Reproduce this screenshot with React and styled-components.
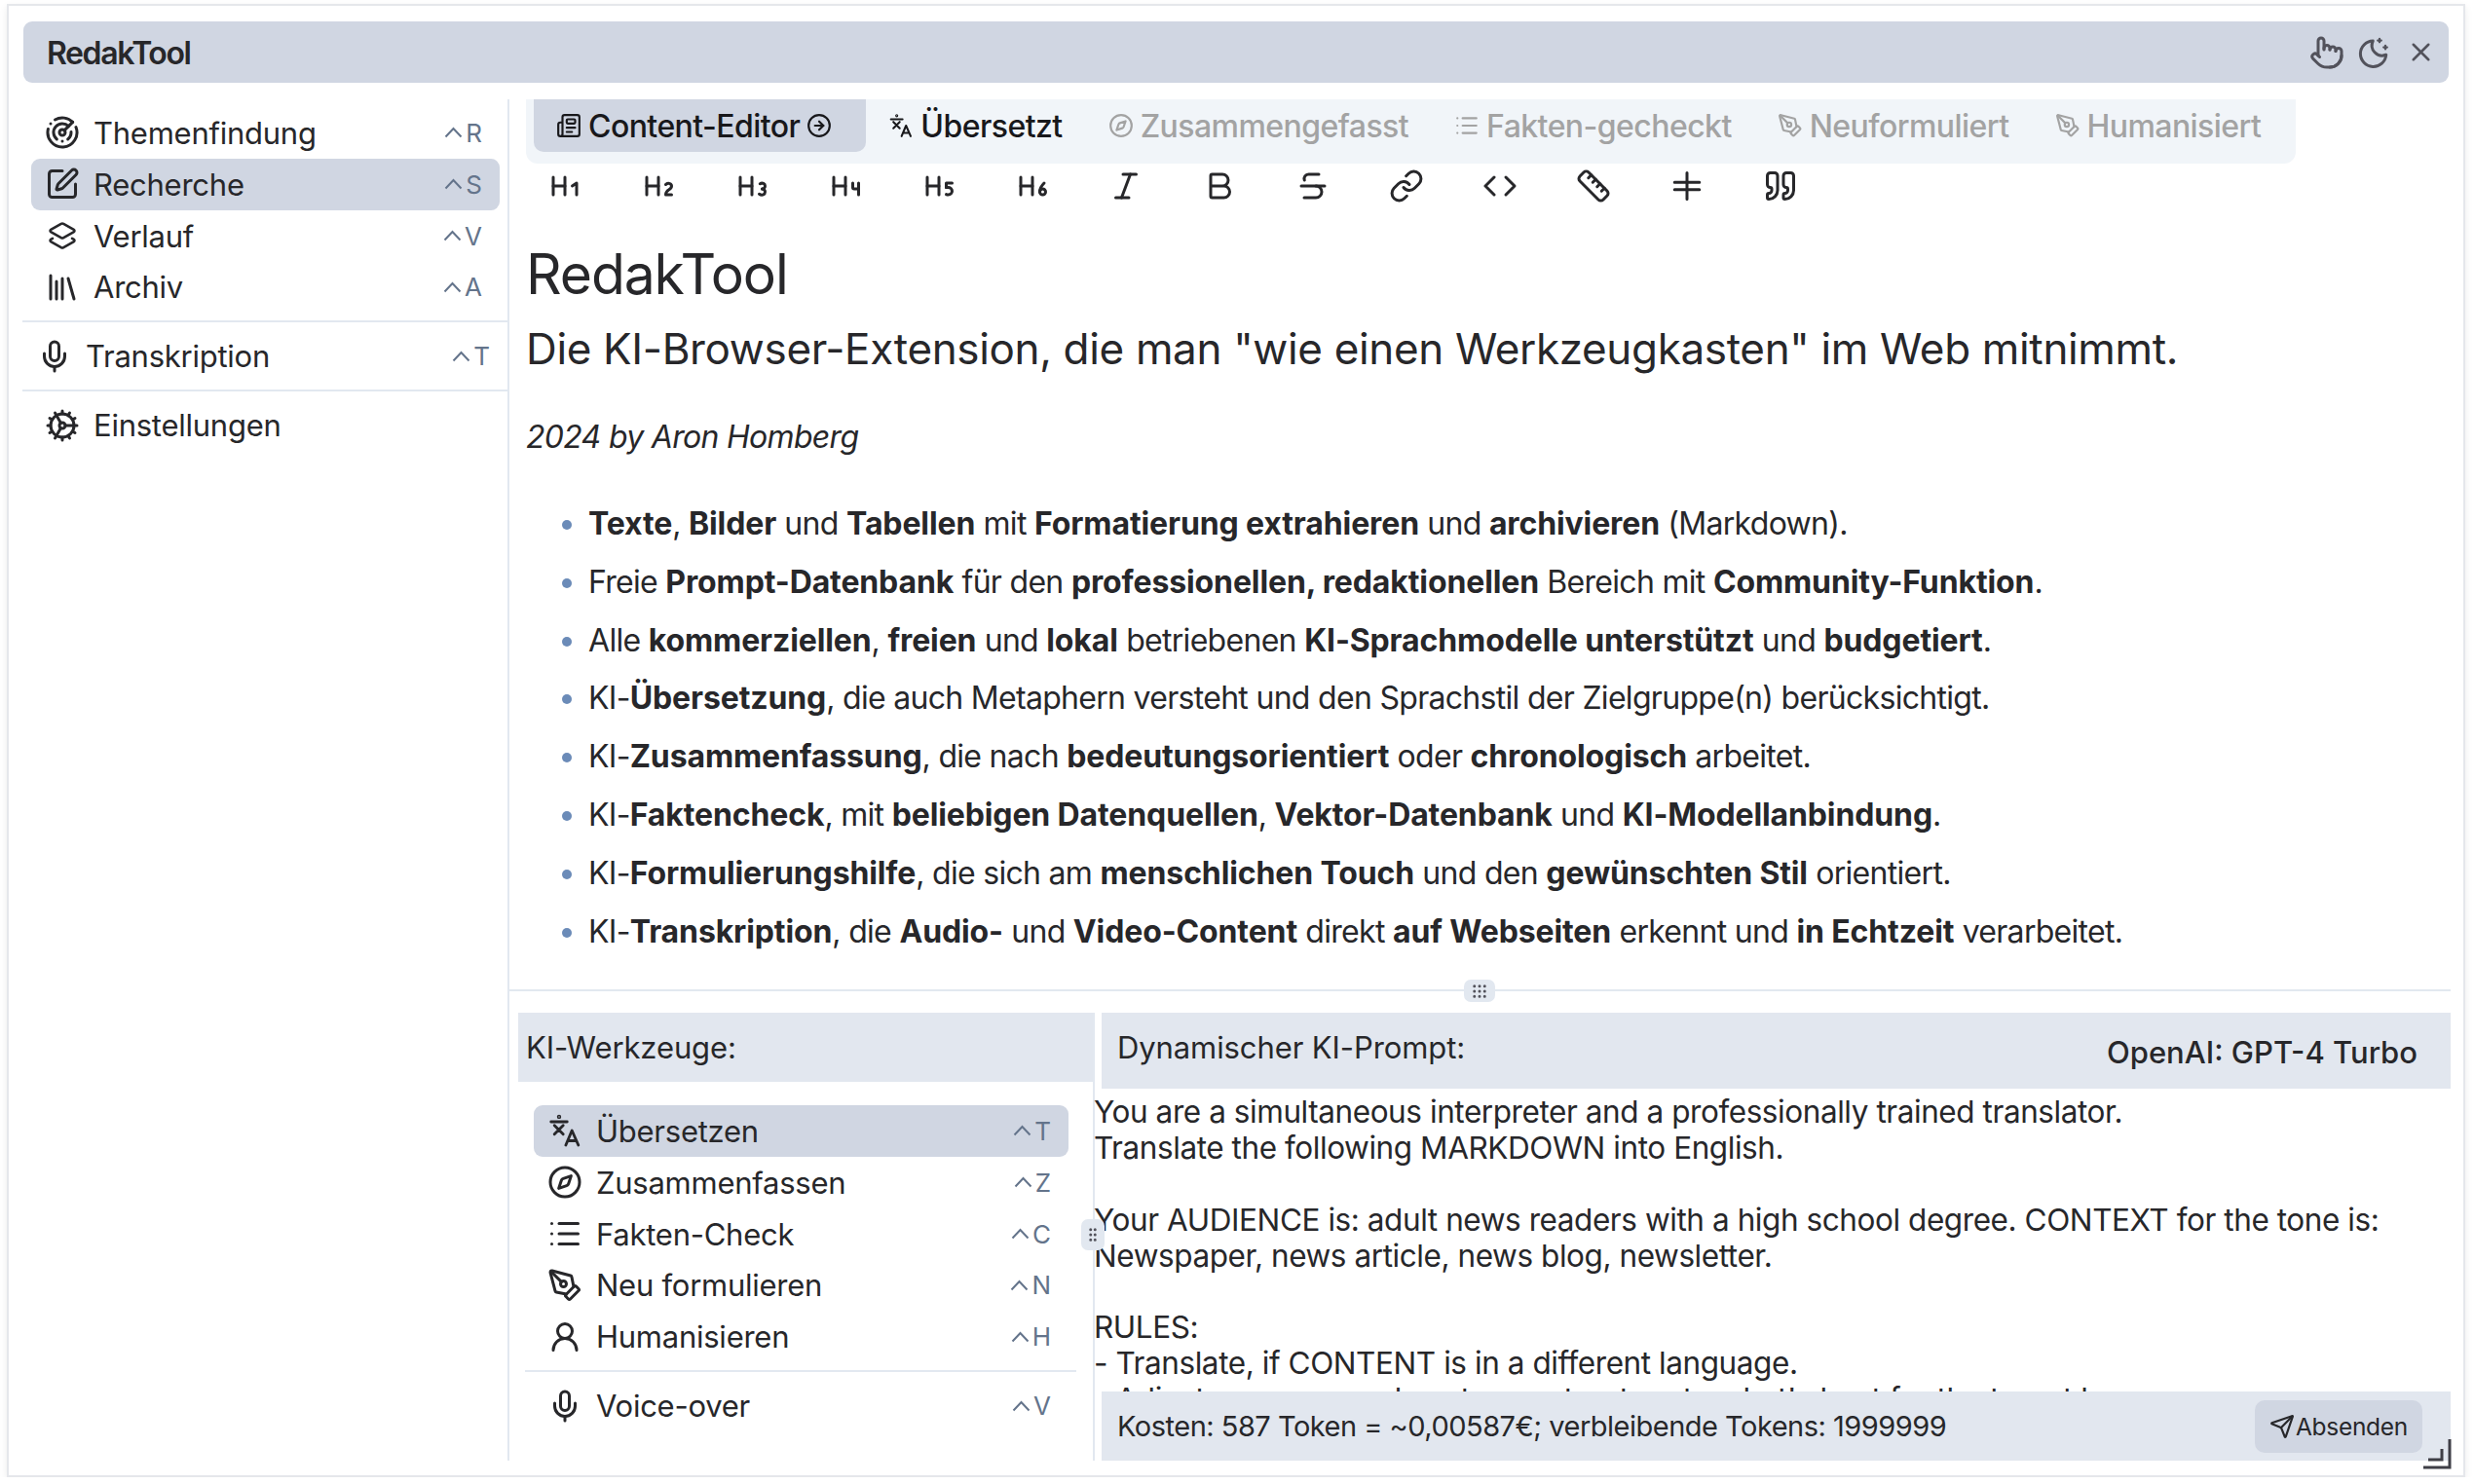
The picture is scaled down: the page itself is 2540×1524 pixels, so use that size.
import React from 'react';
import styled, { createGlobalStyle } from 'styled-components';
import {
  Radar, SquarePen, Layers2, Library, Mic, Cog, Compass, List, PenTool, UserRound, Send, Newspaper,
  CircleArrowRight, Pointer, X, Heading1, Heading2, Heading3, Heading4, Heading5, Heading6,
  Italic, Bold, Strikethrough, Link, Code, Ruler, Quote, Grip, GripVertical,
} from 'lucide-react';

const GlobalStyle = createGlobalStyle`
  html, body {
    margin: 0;
    padding: 0;
    background: #fff;
    font-family: Inter, "Liberation Sans", sans-serif;
    color: #27272a;
  }
  * { box-sizing: border-box; }
`;

const TranslateIcon = ({ size = 38 }) => (
  <svg width={size} height={size} viewBox="0 0 24 24" fill="none" stroke="currentColor" strokeWidth="1.9" strokeLinecap="round" strokeLinejoin="round">
    <circle cx="8" cy="2.6" r="0.5" />
    <path d="M2.5 6h11M4.8 8.5l6 6M10.8 8.5l-6 6M12.6 22l4.2-10 4.4 10M14 19h5.8" />
  </svg>
);

const RuleIcon = ({ size = 36 }) => (
  <svg width={size} height={size} viewBox="0 0 24 24" fill="none" stroke="currentColor" strokeWidth="2" strokeLinecap="round">
    <path d="M3.5 9.5h17M3.5 14.5h17M12 3v18" />
  </svg>
);

const MoonSparkles = () => (
  <svg width="36" height="36" viewBox="0 0 24 24" fill="none" stroke="currentColor" strokeWidth="2" strokeLinecap="round" strokeLinejoin="round">
    <path d="M11.5 4a7 7 0 0 0 9 9.5 8.8 8.8 0 1 1-9-9.5Z" />
    <path d="M16 2.5v2.4M14.8 3.7h2.4M20 7.2v2.4M18.8 8.4h2.4" strokeWidth="1.5" />
  </svg>
);

const Caret = () => (
  <svg width="19" height="12" viewBox="0 0 19 12" fill="none" stroke="currentColor" strokeWidth="2">
    <path d="M1.5 10.5 9.5 2l8 8.5" />
  </svg>
);

const Window = styled.div`
  position: relative;
  width: 2524px;
  height: 1513px;
  margin: 4px 0 0 7px;
  padding-top: 16px;
  border: 2px solid #e5e7eb;
  background: #fff;
  box-shadow: 0 3px 8px rgba(0, 0, 0, 0.08);
`;

const TitleBar = styled.header`
  display: flex;
  align-items: center;
  justify-content: space-between;
  height: 63px;
  margin: 0 15px 0 15px;
  padding: 2px 11px 0 24px;
  border-radius: 9px;
  background: #d0d6e2;
`;

const Title = styled.div`
  font-size: 32px;
  font-weight: 600;
  letter-spacing: -1.4px;
  color: #27272a;
`;

const WindowButtons = styled.div`
  display: flex;
  align-items: center;
  gap: 12px;
  margin-top: -2px;
  color: #52525b;
  svg { display: block; }
`;

const WindowIconSlot = styled.span`
  display: flex;
  align-items: center;
  justify-content: center;
  width: 36px;
  height: 36px;
`;

const Body = styled.div`
  display: flex;
  height: 1398px;
  margin: 17px 13px 0 14px;
`;

const Sidebar = styled.nav`
  flex: 0 0 500px;
  padding-top: 8px;
  border-right: 2px solid #e2e8f0;
`;

const MenuRow = styled.div`
  display: flex;
  align-items: center;
  height: 52.85px;
  margin: 0 ${(p) => (p.$outer ? '0 0 1px' : '8px 0 9px')};
  padding: 0 18px 0 14px;
  border-radius: 9px;
  background: ${(p) => (p.$active ? '#d0d6e2' : 'transparent')};
  font-size: 31px;
  letter-spacing: -0.25px;
  color: #27272a;
`;

const MenuIcon = styled.span`
  display: flex;
  justify-content: center;
  width: 36px;
  margin-right: 14px;
  svg { display: block; }
`;

const MenuLabel = styled.span`
  flex: 1;
`;

const Shortcut = styled.span`
  display: flex;
  align-items: center;
  gap: 3px;
  font-size: 26px;
  letter-spacing: 0;
  color: #64748b;
`;

const Divider = styled.hr`
  height: 2px;
  margin: 8px 0;
  border: 0;
  background: #e2e8f0;
`;

const Main = styled.main`
  flex: 1;
  min-width: 0;
  display: flex;
  flex-direction: column;
`;

const TopPane = styled.section`
  height: 914px;
  padding-left: 17px;
`;

const TabBar = styled.div`
  display: flex;
  width: 1817px;
  height: 66px;
  padding-left: 8px;
  border-radius: 0 0 12px 12px;
  background: #f1f5f9;
`;

const Tab = styled.div`
  display: flex;
  align-items: center;
  gap: 7px;
  height: 54px;
  padding: 0 ${(p) => (p.$active ? 35 : 24)}px 0 23px;
  border-radius: 0 0 10px 10px;
  background: ${(p) => (p.$active ? '#d0d6e2' : 'transparent')};
  color: ${(p) => (p.$dim ? '#a3a3a3' : '#18181b')};
  font-size: 32px;
  font-weight: 500;
  letter-spacing: -0.56px;
  white-space: nowrap;
  svg { display: block; flex: none; }
`;

const Toolbar = styled.div`
  display: flex;
  height: 46px;
  margin-left: -8px;
  color: #27272a;
`;

const ToolButton = styled.span`
  display: flex;
  align-items: center;
  justify-content: center;
  width: 96px;
  svg { display: block; }
`;

const Heading = styled.h1`
  margin: 33px 0 0;
  font-size: 57px;
  line-height: 70px;
  font-weight: 400;
  letter-spacing: -1.1px;
  color: #27272a;
`;

const SubHeading = styled.h2`
  margin: 11px 0 0;
  font-size: 44px;
  line-height: 60px;
  font-weight: 400;
  letter-spacing: -0.34px;
  color: #27272a;
`;

const Byline = styled.p`
  margin: 38px 0 0;
  font-size: 32px;
  line-height: 46px;
  font-style: italic;
  letter-spacing: -0.7px;
`;

const Features = styled.ul`
  margin: 36px 0 0;
  padding: 0 0 0 64px;
  font-size: 32px;
  line-height: 59.8px;
  letter-spacing: -0.7px;
  li::marker { color: #6b8bb8; }
  b { font-weight: 700; letter-spacing: -0.12px; }
`;

const BottomPane = styled.section`
  position: relative;
  flex: 1;
  display: flex;
  min-height: 0;
  padding: 22px 0 0 9px;
  border-top: 2px solid #e2e8f0;
`;

const GripHandle = styled.span`
  position: absolute;
  display: flex;
  align-items: center;
  justify-content: center;
  background: #e2e8f0;
  border-radius: 7px;
  color: #52525b;
  z-index: 2;
  ${(p) => (p.$vertical
    ? 'left: 587px; top: 234px; width: 24px; height: 32px;'
    : 'left: 980px; top: -12px; width: 32px; height: 23px;')}
`;

const ToolColumn = styled.div`
  flex: 0 0 592px;
  border-right: 2px solid #e2e8f0;
`;

const ColumnHeader = styled.div`
  height: ${(p) => p.$height}px;
  display: flex;
  align-items: flex-start;
  justify-content: space-between;
  padding: ${(p) => p.$padding};
  background: #e2e7ef;
  font-size: 31px;
  line-height: 36px;
  letter-spacing: -0.1px;
  color: #27272a;
`;

const ToolList = styled.div`
  padding: 24px 17px 0 7px;
`;

const PromptColumn = styled.div`
  flex: 1;
  min-width: 0;
  display: flex;
  flex-direction: column;
`;

const PromptHeader = styled(ColumnHeader)`
  flex: none;
  margin-left: 7px;
`;

const ModelName = styled.span`
  margin-top: 5px;
  font-weight: 500;
  letter-spacing: 0;
  color: #27272a;
`;

const PromptText = styled.div`
  flex: 1;
  min-height: 0;
  margin: 6px 0 0 -1px;
  overflow: hidden;
  white-space: pre-wrap;
  font-size: 31.5px;
  line-height: 36.9px;
  letter-spacing: -0.43px;
  color: #27272a;
`;

const Footer = styled.div`
  flex: none;
  display: flex;
  align-items: center;
  justify-content: space-between;
  height: 71px;
  margin-left: 7px;
  padding: 0 29px 0 16px;
  background: #e2e7ef;
  font-size: 29px;
  letter-spacing: -0.5px;
`;

const SendButton = styled.span`
  display: flex;
  align-items: center;
  justify-content: center;
  gap: 1px;
  width: 172px;
  height: 54px;
  margin-top: 1px;
  border-radius: 10px;
  background: #d0d6e2;
  font-size: 24.5px;
  letter-spacing: -0.3px;
  svg { display: block; }
`;

const ResizeCorner = styled.svg`
  position: absolute;
  right: 12px;
  bottom: 5px;
  width: 30px;
  height: 34px;
`;

const menuIcon = 36;
const tabIcon = 26;

const topMenu = [
  { icon: <Radar size={menuIcon} />, label: 'Themenfindung', key: 'R' },
  { icon: <SquarePen size={menuIcon} />, label: 'Recherche', key: 'S', active: true },
  { icon: <Layers2 size={30} />, label: 'Verlauf', key: 'V' },
  { icon: <Library size={menuIcon} />, label: 'Archiv', key: 'A' },
];

const tabs = [
  { icon: <Newspaper size={tabIcon} />, label: 'Content-Editor', active: true, after: <CircleArrowRight size={tabIcon} /> },
  { icon: <TranslateIcon size={26} />, label: 'Übersetzt' },
  { icon: <Compass size={tabIcon} />, label: 'Zusammengefasst', dim: true },
  { icon: <List size={tabIcon} />, label: 'Fakten-gecheckt', dim: true },
  { icon: <PenTool size={tabIcon} />, label: 'Neuformuliert', dim: true },
  { icon: <PenTool size={tabIcon} />, label: 'Humanisiert', dim: true },
];

const toolbar = [Heading1, Heading2, Heading3, Heading4, Heading5, Heading6, Italic, Bold, Strikethrough, Link, Code, Ruler, RuleIcon, Quote];

const tools = [
  { icon: <TranslateIcon />, label: 'Übersetzen', key: 'T', active: true },
  { icon: <Compass size={menuIcon} />, label: 'Zusammenfassen', key: 'Z' },
  { icon: <List size={menuIcon} />, label: 'Fakten-Check', key: 'C' },
  { icon: <PenTool size={menuIcon} />, label: 'Neu formulieren', key: 'N' },
  { icon: <UserRound size={menuIcon} />, label: 'Humanisieren', key: 'H' },
];

const prompt = `You are a simultaneous interpreter and a professionally trained translator.
Translate the following MARKDOWN into English.

Your AUDIENCE is: adult news readers with a high school degree. CONTEXT for the tone is:
Newspaper, news article, news blog, newsletter.

RULES:
- Translate, if CONTENT is in a different language.
- Adjust grammar and sentence structure to what's best for the target language.`;

const Row = ({ icon, label, shortcut, active, outer }) => (
  <MenuRow $active={active} $outer={outer}>
    <MenuIcon>{icon}</MenuIcon>
    <MenuLabel>{label}</MenuLabel>
    {shortcut && (
      <Shortcut>
        <Caret />
        {shortcut}
      </Shortcut>
    )}
  </MenuRow>
);

const App = () => (
  <>
    <GlobalStyle />
    <Window>
      <TitleBar>
        <Title>RedakTool</Title>
        <WindowButtons>
          <WindowIconSlot><Pointer size={36} /></WindowIconSlot>
          <WindowIconSlot><MoonSparkles /></WindowIconSlot>
          <WindowIconSlot><X size={31} /></WindowIconSlot>
        </WindowButtons>
      </TitleBar>
      <Body>
        <Sidebar>
          {topMenu.map((item) => (
            <Row key={item.label} icon={item.icon} label={item.label} shortcut={item.key} active={item.active} />
          ))}
          <Divider />
          <Row outer icon={<Mic size={menuIcon} />} label="Transkription" shortcut="T" />
          <Divider />
          <Row icon={<Cog size={menuIcon} />} label="Einstellungen" />
        </Sidebar>
        <Main>
          <TopPane>
            <TabBar>
              {tabs.map((tab) => (
                <Tab key={tab.label} $active={tab.active} $dim={tab.dim}>
                  {tab.icon}
                  {tab.label}
                  {tab.after}
                </Tab>
              ))}
            </TabBar>
            <Toolbar>
              {toolbar.map((Icon, i) => (
                <ToolButton key={i}><Icon size={36} /></ToolButton>
              ))}
            </Toolbar>
            <Heading>RedakTool</Heading>
            <SubHeading>Die KI-Browser-Extension, die man "wie einen Werkzeugkasten" im Web mitnimmt.</SubHeading>
            <Byline>2024 by Aron Homberg</Byline>
            <Features>
              <li><b>Texte</b>, <b>Bilder</b> und <b>Tabellen</b> mit <b>Formatierung extrahieren</b> und <b>archivieren</b> (Markdown).</li>
              <li>Freie <b>Prompt-Datenbank</b> für den <b>professionellen, redaktionellen</b> Bereich mit <b>Community-Funktion</b>.</li>
              <li>Alle <b>kommerziellen</b>, <b>freien</b> und <b>lokal</b> betriebenen <b>KI-Sprachmodelle unterstützt</b> und <b>budgetiert</b>.</li>
              <li>KI-<b>Übersetzung</b>, die auch Metaphern versteht und den Sprachstil der Zielgruppe(n) berücksichtigt.</li>
              <li>KI-<b>Zusammenfassung</b>, die nach <b>bedeutungsorientiert</b> oder <b>chronologisch</b> arbeitet.</li>
              <li>KI-<b>Faktencheck</b>, mit <b>beliebigen Datenquellen</b>, <b>Vektor-Datenbank</b> und <b>KI-Modellanbindung</b>.</li>
              <li>KI-<b>Formulierungshilfe</b>, die sich am <b>menschlichen Touch</b> und den <b>gewünschten Stil</b> orientiert.</li>
              <li>KI-<b>Transkription</b>, die <b>Audio-</b> und <b>Video-Content</b> direkt <b>auf Webseiten</b> erkennt und <b>in Echtzeit</b> verarbeitet.</li>
            </Features>
          </TopPane>
          <BottomPane>
            <GripHandle><Grip size={18} /></GripHandle>
            <GripHandle $vertical><GripVertical size={18} /></GripHandle>
            <ToolColumn>
              <ColumnHeader $height={71} $padding="18px 8px 0">KI-Werkzeuge:</ColumnHeader>
              <ToolList>
                {tools.map((item) => (
                  <Row key={item.label} icon={item.icon} label={item.label} shortcut={item.key} active={item.active} />
                ))}
                <Divider />
                <Row icon={<Mic size={menuIcon} />} label="Voice-over" shortcut="V" />
              </ToolList>
            </ToolColumn>
            <PromptColumn>
              <PromptHeader $height={78} $padding="18px 34px 0 16px">
                Dynamischer KI-Prompt:
                <ModelName>OpenAI: GPT-4 Turbo</ModelName>
              </PromptHeader>
              <PromptText>{prompt}</PromptText>
              <Footer>
                Kosten: 587 Token = ~0,00587€; verbleibende Tokens: 1999999
                <SendButton><Send size={26} />Absenden</SendButton>
              </Footer>
            </PromptColumn>
          </BottomPane>
        </Main>
      </Body>
      <ResizeCorner viewBox="0 0 30 34" fill="none" stroke="#3f3f46" strokeWidth="3">
        <path d="M1 31h27V2M6 23h14V12" />
      </ResizeCorner>
    </Window>
  </>
);

export default App;
